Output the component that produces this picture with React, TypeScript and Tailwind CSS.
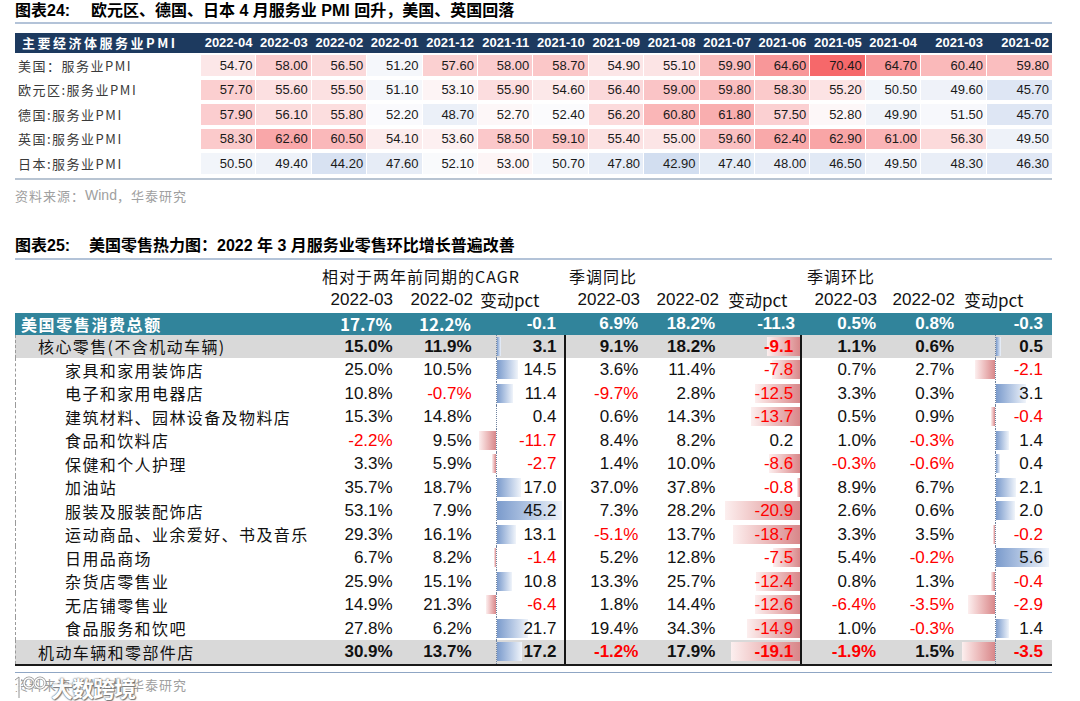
import React from "react";

const heat = (v: number): string => {
  const mid = 52.5;
  const lerp = (a: number, b: number, t: number) => Math.round(a + (b - a) * t);
  if (v >= mid) {
    const t = Math.min(1, (v - mid) / (70.4 - mid));
    return `rgb(${lerp(253, 246, t)},${lerp(249, 104, t)},${lerp(250, 106, t)})`;
  }
  const t = Math.min(1, (mid - v) / (mid - 42.9));
  return `rgb(${lerp(251, 210, t)},${lerp(251, 222, t)},${lerp(253, 240, t)})`;
};

const months = [
  "2022-04", "2022-03", "2022-02", "2022-01", "2021-12", "2021-11", "2021-10", "2021-09",
  "2021-08", "2021-07", "2021-06", "2021-05", "2021-04", "2021-03", "2021-02",
];

const pmi: { l: string; v: number[] }[] = [
  { l: "美国：服务业PMI", v: [54.7, 58.0, 56.5, 51.2, 57.6, 58.0, 58.7, 54.9, 55.1, 59.9, 64.6, 70.4, 64.7, 60.4, 59.8] },
  { l: "欧元区:服务业PMI", v: [57.7, 55.6, 55.5, 51.1, 53.1, 55.9, 54.6, 56.4, 59.0, 59.8, 58.3, 55.2, 50.5, 49.6, 45.7] },
  { l: "德国:服务业PMI", v: [57.9, 56.1, 55.8, 52.2, 48.7, 52.7, 52.4, 56.2, 60.8, 61.8, 57.5, 52.8, 49.9, 51.5, 45.7] },
  { l: "英国:服务业PMI", v: [58.3, 62.6, 60.5, 54.1, 53.6, 58.5, 59.1, 55.4, 55.0, 59.6, 62.4, 62.9, 61.0, 56.3, 49.5] },
  { l: "日本:服务业PMI", v: [50.5, 49.4, 44.2, 47.6, 52.1, 53.0, 50.7, 47.8, 42.9, 47.4, 48.0, 46.5, 49.5, 48.3, 46.3] },
];

type Kind = "total" | "main" | "sub";
type R = { l: string; k: Kind; a: string; b: string; c: number; d: string; e: string; f: number; g: string; h: string; i: number };

const retail: R[] = [
  { l: "美国零售消费总额", k: "total", a: "17.7%", b: "12.2%", c: -0.1, d: "6.9%", e: "18.2%", f: -11.3, g: "0.5%", h: "0.8%", i: -0.3 },
  { l: "核心零售(不含机动车辆)", k: "main", a: "15.0%", b: "11.9%", c: 3.1, d: "9.1%", e: "18.2%", f: -9.1, g: "1.1%", h: "0.6%", i: 0.5 },
  { l: "家具和家用装饰店", k: "sub", a: "25.0%", b: "10.5%", c: 14.5, d: "3.6%", e: "11.4%", f: -7.8, g: "0.7%", h: "2.7%", i: -2.1 },
  { l: "电子和家用电器店", k: "sub", a: "10.8%", b: "-0.7%", c: 11.4, d: "-9.7%", e: "2.8%", f: -12.5, g: "3.3%", h: "0.3%", i: 3.1 },
  { l: "建筑材料、园林设备及物料店", k: "sub", a: "15.3%", b: "14.8%", c: 0.4, d: "0.6%", e: "14.3%", f: -13.7, g: "0.5%", h: "0.9%", i: -0.4 },
  { l: "食品和饮料店", k: "sub", a: "-2.2%", b: "9.5%", c: -11.7, d: "8.4%", e: "8.2%", f: 0.2, g: "1.0%", h: "-0.3%", i: 1.4 },
  { l: "保健和个人护理", k: "sub", a: "3.3%", b: "5.9%", c: -2.7, d: "1.4%", e: "10.0%", f: -8.6, g: "-0.3%", h: "-0.6%", i: 0.4 },
  { l: "加油站", k: "sub", a: "35.7%", b: "18.7%", c: 17.0, d: "37.0%", e: "37.8%", f: -0.8, g: "8.9%", h: "6.7%", i: 2.1 },
  { l: "服装及服装配饰店", k: "sub", a: "53.1%", b: "7.9%", c: 45.2, d: "7.3%", e: "28.2%", f: -20.9, g: "2.6%", h: "0.6%", i: 2.0 },
  { l: "运动商品、业余爱好、书及音乐", k: "sub", a: "29.3%", b: "16.1%", c: 13.1, d: "-5.1%", e: "13.7%", f: -18.7, g: "3.3%", h: "3.5%", i: -0.2 },
  { l: "日用品商场", k: "sub", a: "6.7%", b: "8.2%", c: -1.4, d: "5.2%", e: "12.8%", f: -7.5, g: "5.4%", h: "-0.2%", i: 5.6 },
  { l: "杂货店零售业", k: "sub", a: "25.9%", b: "15.1%", c: 10.8, d: "13.3%", e: "25.7%", f: -12.4, g: "0.8%", h: "1.3%", i: -0.4 },
  { l: "无店铺零售业", k: "sub", a: "14.9%", b: "21.3%", c: -6.4, d: "1.8%", e: "14.4%", f: -12.6, g: "-6.4%", h: "-3.5%", i: -2.9 },
  { l: "食品服务和饮吧", k: "sub", a: "27.8%", b: "6.2%", c: 21.7, d: "19.4%", e: "34.3%", f: -14.9, g: "1.0%", h: "-0.3%", i: 1.4 },
  { l: "机动车辆和零部件店", k: "main", a: "30.9%", b: "13.7%", c: 17.2, d: "-1.2%", e: "17.9%", f: -19.1, g: "-1.9%", h: "1.5%", i: -3.5 },
];

const NegBar = ({ w }: { w: number }) => (
  <div className="h-[19px] bg-linear-to-l from-[#d8878a] to-[#fcefef]" style={{ width: w }} />
);
const PosBar = ({ w }: { w: number }) => (
  <div className="[grid-area:1/1] justify-self-start h-[19px] bg-linear-to-r from-[#7b9bcc] to-[#f0f4fa]" style={{ width: w }} />
);

const txtColor = (k: Kind, s: string) => (k === "total" ? "text-white" : s.startsWith("-") ? "text-[#ff0000]" : "text-[#111]");

function RetailRow({ r }: { r: R }) {
  const total = r.k === "total";
  const rowCls = total
    ? "h-[22px] bg-[#31849b] font-bold"
    : r.k === "main"
    ? "h-[23.5px] bg-[#d9d9d9] font-bold border-l border-dashed border-[#9a9a9a]"
    : "h-[23.5px] border-l border-dashed border-[#9a9a9a]";
  const cell = "flex items-center justify-end h-full";
  const cs = r.c.toFixed(1);
  const fs = r.f.toFixed(1);
  const is = r.i.toFixed(1);
  return (
    <div className={`flex text-[17px] leading-none ${rowCls}`}>
      <div
        className={`w-[310px] flex items-center h-full font-['Noto_Sans_CJK_SC',sans-serif] text-[16px] ${
          total ? "pl-[6px] text-white font-bold tracking-[1.6px]" : r.k === "main" ? "pl-[22px] font-normal tracking-[1.4px] text-[#111]" : "pl-[49px] font-normal tracking-[1.4px] text-[#111]"
        }`}
      >
        {r.l}
      </div>
      <div className={`${cell} w-[73px] pr-[6px] ${txtColor(r.k, r.a)} ${total ? "font-['Noto_Sans_CJK_SC',sans-serif]" : ""}`}>{r.a}</div>
      <div className={`${cell} w-[77px] pr-[4px] ${txtColor(r.k, r.b)} ${total ? "font-['Noto_Sans_CJK_SC',sans-serif]" : ""}`}>{r.b}</div>
      <div className="w-[89px] flex h-full">
        <div className="w-[20px] flex items-center justify-end h-full">{!total && r.c < 0 && <NegBar w={-r.c * 1.45} />}</div>
        <div className={`flex-1 grid items-center h-full ${total ? "" : "border-l border-dotted border-[#6f829e]"}`}>
          {!total && r.c > 0 && <PosBar w={r.c * 1.45} />}
          <span className={`[grid-area:1/1] justify-self-end pr-[8px] ${txtColor(r.k, cs)}`}>{cs}</span>
        </div>
      </div>
      <div className={`${cell} w-[81px] pr-[7px] ${total ? "" : "border-l-2 border-[#151515]"} ${txtColor(r.k, r.d)}`}>{r.d}</div>
      <div className={`${cell} w-[75px] pr-[5px] ${txtColor(r.k, r.e)}`}>{r.e}</div>
      <div className={`w-[82px] grid items-center h-full ${total ? "" : "border-r-2 border-[#151515]"}`}>
        {!total && r.f < 0 && (
          <div className="[grid-area:1/1] justify-self-end h-[19px] bg-linear-to-l from-[#d8878a] to-[#fcefef]" style={{ width: -r.f * 3.6 }} />
        )}
        <span className={`[grid-area:1/1] justify-self-end pr-[7px] ${txtColor(r.k, fs)}`}>{fs}</span>
      </div>
      <div className={`${cell} w-[80px] pr-[6px] ${txtColor(r.k, r.g)}`}>{r.g}</div>
      <div className={`${cell} w-[78px] pr-[6px] ${txtColor(r.k, r.h)}`}>{r.h}</div>
      <div className="w-[92px] flex h-full">
        <div className="w-[35px] flex items-center justify-end h-full">{!total && r.i < 0 && <NegBar w={-r.i * 9.5} />}</div>
        <div className={`flex-1 grid items-center h-full ${total ? "" : "border-l border-dotted border-[#6f829e]"}`}>
          {!total && r.i > 0 && <PosBar w={r.i * 9.5} />}
          <span className={`[grid-area:1/1] justify-self-end pr-[9px] ${txtColor(r.k, is)}`}>{is}</span>
        </div>
      </div>
    </div>
  );
}

export default function App() {
  return (
    <div className="w-[1080px] h-[701px] bg-white overflow-hidden font-['Liberation_Sans','Noto_Sans_CJK_SC',sans-serif] text-[#111]">
      <div className="ml-[15px] w-[1037px] relative">
        {/* Title 1 */}
        <div className="h-[22px] flex items-center text-[16px] font-bold text-black whitespace-nowrap">
          <span className="w-[76px]">图表24:</span>
          <span>欧元区、德国、日本 4 月服务业 PMI 回升，美国、英国回落</span>
        </div>
        <div className="h-[2px] bg-[#b3c3d8]" />

        {/* Table 1 */}
        <div className="mt-[9px] h-[20px] flex bg-[#1d3a5f] text-white font-bold text-[13px]">
          <div className="w-[185px] flex items-center pl-[7px] font-['Noto_Sans_CJK_SC',sans-serif] tracking-[2.5px]">主要经济体服务业PMI</div>
          {months.map((m, i) => (
            <div key={m} className={`${i >= 13 ? "w-[66px]" : "w-[55.4px]"} flex items-center justify-end pr-[3px]`}>
              {m}
            </div>
          ))}
        </div>
        {pmi.map((row) => (
          <div key={row.l} className="flex h-[24.5px] py-[2px]">
            <div className="w-[185px] flex items-center pl-[3px] text-[13px] text-[#3a3a3a] font-['Noto_Sans_CJK_SC',sans-serif] tracking-[1.5px]">
              {row.l}
            </div>
            {row.v.map((v, i) => (
              <div
                key={i}
                className={`${i >= 13 ? "w-[66px]" : "w-[55.4px]"} flex items-center justify-end pr-[3px] text-[13px] text-[#1a1a1a] border-l-[1.5px] border-white`}
                style={{ backgroundColor: heat(v) }}
              >
                {v.toFixed(2)}
              </div>
            ))}
          </div>
        ))}
        <div className="mt-[2px] h-[2px] bg-[#b8c4d2]" />
        <div className="mt-[6px] h-[20px] flex items-center text-[13px] text-[#a0a0a0] font-['Noto_Sans_CJK_SC',sans-serif] tracking-[1px]">
          资料来源：<span className="font-['Liberation_Sans',sans-serif] tracking-normal text-[14px]">Wind</span>，华泰研究
        </div>

        {/* Title 2 */}
        <div className="mt-[30px] h-[20px] flex items-center text-[16px] font-bold text-black whitespace-nowrap">
          <span className="w-[74px]">图表25:</span>
          <span>美国零售热力图：2022 年 3 月服务业零售环比增长普遍改善</span>
        </div>
        <div className="mt-[2px] h-[2px] bg-[#b3c3d8]" />

        {/* Header rows */}
        <div className="mt-[4px] h-[24px] flex items-center text-[16px] font-['Noto_Sans_CJK_SC',sans-serif] tracking-[1px] text-[#111]">
          <div className="w-[307px]" />
          <div className="w-[247px]">相对于两年前同期的CAGR</div>
          <div className="w-[238px]">季调同比</div>
          <div>季调环比</div>
        </div>
        <div className="h-[25px] flex items-center text-[17px] text-[#111]">
          <div className="w-[310px]" />
          <div className="w-[73px] text-right pr-[5px]">2022-03</div>
          <div className="w-[77px] text-right pr-[2px]">2022-02</div>
          <div className="w-[89px] pl-[5px] font-['Noto_Sans_CJK_SC',sans-serif]">变动pct</div>
          <div className="w-[81px] text-right pr-[5px]">2022-03</div>
          <div className="w-[75px] text-right pr-[1px]">2022-02</div>
          <div className="w-[82px] pl-[8px] font-['Noto_Sans_CJK_SC',sans-serif]">变动pct</div>
          <div className="w-[80px] text-right pr-[5px]">2022-03</div>
          <div className="w-[78px] text-right pr-[5px]">2022-02</div>
          <div className="w-[92px] pl-[4px] font-['Noto_Sans_CJK_SC',sans-serif]">变动pct</div>
        </div>

        {retail.map((r) => (
          <RetailRow key={r.l} r={r} />
        ))}
        <div className="h-[2px] bg-[#1a1a1a]" />
        <div className="mt-[6px] h-[1px] bg-[#8fa6c4]" />
        <div className="mt-[2px] h-[20px] flex items-center text-[13px] text-[#a0a0a0] font-['Noto_Sans_CJK_SC',sans-serif] tracking-[1px]">
          资料来源：<span className="font-['Liberation_Sans',sans-serif] tracking-normal text-[14px]">Wind</span>，华泰研究
        </div>

        {/* watermark */}
        <div className="absolute left-[-6px] top-[671px] flex items-center gap-[2px] opacity-90">
          <svg width="40" height="28" viewBox="0 0 40 28">
            <path d="M6 6 L10 3 L10 24" fill="none" stroke="#fff" strokeWidth="4" />
            <path d="M6 6 L10 3 L10 24" fill="none" stroke="#8a8a8a" strokeWidth="1" />
            <circle cx="20" cy="9" r="5" fill="none" stroke="#8a8a8a" strokeWidth="3" />
            <circle cx="20" cy="9" r="5" fill="none" stroke="#fff" strokeWidth="1.5" />
            <circle cx="31" cy="9" r="5" fill="none" stroke="#8a8a8a" strokeWidth="3" />
            <circle cx="31" cy="9" r="5" fill="none" stroke="#fff" strokeWidth="1.5" />
          </svg>
          <span className="text-[22px] font-bold text-white font-['Noto_Sans_CJK_SC',sans-serif] [text-shadow:0_0_1px_#555,0_0_2px_#777,1px_1px_1px_#666] tracking-[-1px]">
            大数跨境
          </span>
        </div>
      </div>
    </div>
  );
}
